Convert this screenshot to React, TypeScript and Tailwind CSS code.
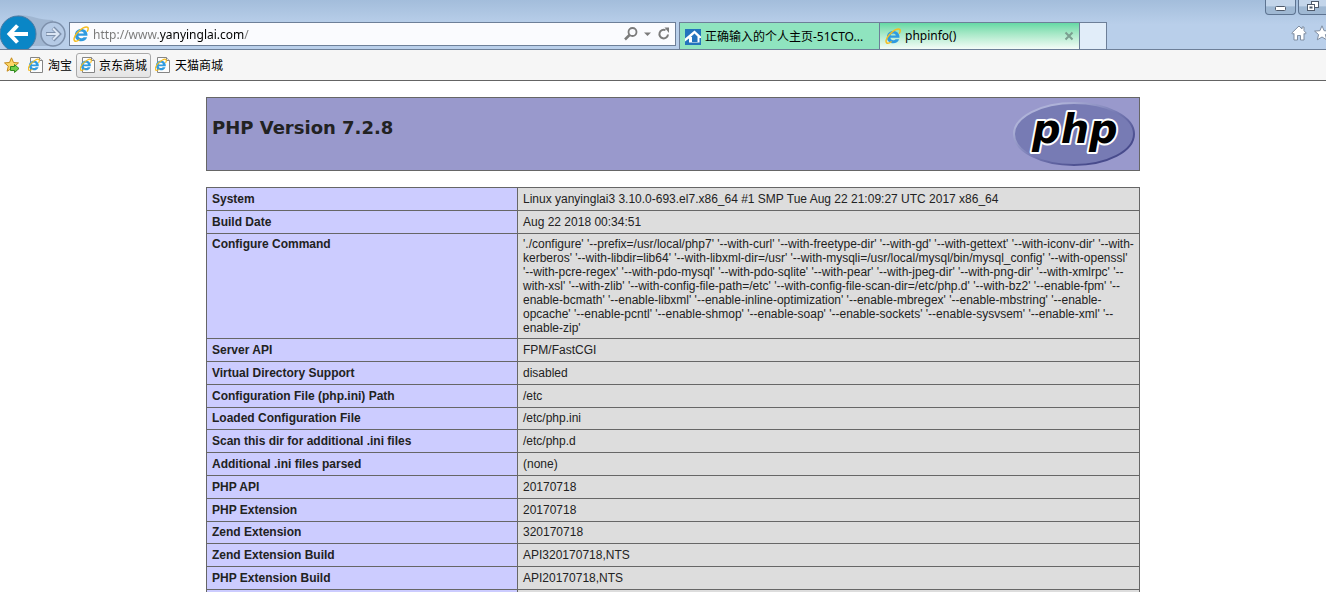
import React, { useState } from 'react';

const uiFont = "font-['Noto_Sans','Noto_Sans_CJK_SC',sans-serif]";

const configureCommand =
  "'./configure' '--prefix=/usr/local/php7' '--with-curl' '--with-freetype-dir' '--with-gd' '--with-gettext' '--with-iconv-dir' '--with-kerberos' '--with-libdir=lib64' '--with-libxml-dir=/usr' '--with-mysqli=/usr/local/mysql/bin/mysql_config' '--with-openssl' '--with-pcre-regex' '--with-pdo-mysql' '--with-pdo-sqlite' '--with-pear' '--with-jpeg-dir' '--with-png-dir' '--with-xmlrpc' '--with-xsl' '--with-zlib' '--with-config-file-path=/etc' '--with-config-file-scan-dir=/etc/php.d' '--with-bz2' '--enable-fpm' '--enable-bcmath' '--enable-libxml' '--enable-inline-optimization' '--enable-mbregex' '--enable-mbstring' '--enable-opcache' '--enable-pcntl' '--enable-shmop' '--enable-soap' '--enable-sockets' '--enable-sysvsem' '--enable-xml' '--enable-zip'";

// Tight rows have a little less padding
const rows = [
  { name: 'System', value: 'Linux yanyinglai3 3.10.0-693.el7.x86_64 #1 SMP Tue Aug 22 21:09:27 UTC 2017 x86_64' },
  { name: 'Build Date', value: 'Aug 22 2018 00:34:51' },
  { name: 'Configure Command', value: configureCommand, padding: 'py-[3px]' },
  { name: 'Server API', value: 'FPM/FastCGI' },
  { name: 'Virtual Directory Support', value: 'disabled' },
  { name: 'Configuration File (php.ini) Path', value: '/etc' },
  { name: 'Loaded Configuration File', value: '/etc/php.ini', padding: 'pt-[3px] pb-1' },
  { name: 'Scan this dir for additional .ini files', value: '/etc/php.d' },
  { name: 'Additional .ini files parsed', value: '(none)' },
  { name: 'PHP API', value: '20170718' },
  { name: 'PHP Extension', value: '20170718' },
  { name: 'Zend Extension', value: '320170718', padding: 'pt-[3px] pb-1' },
  { name: 'Zend Extension Build', value: 'API320170718,NTS' },
  { name: 'PHP Extension Build', value: 'API20170718,NTS' },
];

const IeShape = () => (
  <>
    <path d="M14.500 9.800H5.400c.1 1.600 1.300 2.500 2.800 2.500 1.100 0 1.800-.4 2.300-1.100h3.600c-.8 2.600-3 4-5.900 4-3.700 0-6.300-2.400-6.300-6 0-3.700 2.600-6.200 6.300-6.200 3.900 0 6.500 2.600 6.300 6.800zM5.500 7.600h5.300c-.1-1.300-1.200-2.100-2.600-2.100s-2.500.8-2.700 2.100z" fill="#2f9be0" />
    <path d="M2.200 15.200C.2 14.500.8 10.700 4.300 6.700 8 2.500 13-.2 14.700 1.400c.8.800.5 2.200-.3 3.700" fill="none" stroke="#f5bd22" strokeWidth="1.500" strokeLinecap="round" />
    <path d="M2.200 15.200c1 .3 2.600-.3 4.200-1.400" fill="none" stroke="#f5bd22" strokeWidth="1.200" strokeLinecap="round" />
  </>
);

const IeIcon = () => (
  <svg className="h-4 w-4 shrink-0" viewBox="0 0 16 16" aria-hidden="true">
    <IeShape />
  </svg>
);

const IePageIcon = () => (
  <svg className="h-4 w-4 shrink-0" viewBox="0 0 16 16" aria-hidden="true">
    <path d="M2.500.5h9l3 3v12h-12z" fill="#fdfdfd" stroke="#858585" />
    <path d="M11.500.5v3h3" fill="#e8e8e8" stroke="#858585" />
    <g transform="translate(-.5 1.500) scale(.78)">
      <IeShape />
    </g>
  </svg>
);

const PhpLogo = () => (
  <svg className="h-[65px] w-[122px] shrink-0" viewBox="0 0 122 65" role="img" aria-label="PHP logo">
    <defs>
      <linearGradient id="rim" x1="0" y1="0" x2="1" y2="1">
        <stop offset=".2" stopColor="#aeb2d8" />
        <stop offset=".5" stopColor="#777bb4" />
        <stop offset=".8" stopColor="#484b8c" />
      </linearGradient>
    </defs>
    <ellipse cx="61" cy="32" rx="60" ry="31" fill="#777bb4" stroke="url(#rim)" strokeWidth="2" />
    <text x="19" y="41" fontSize="40" stroke="#fff" strokeWidth="4" strokeLinejoin="round" paintOrder="stroke" className="font-['DejaVu_Sans',sans-serif] font-bold italic">
      php
    </text>
  </svg>
);

const NavButtons = () => (
  <div className="relative h-[34px] w-[69px] shrink-0">
    <svg className="h-[34px] w-[69px]" viewBox="0 0 69 34" aria-hidden="true">
      <path d="M18 0c14 0 20 5 35 5v26H18z" fill="#a0b6d1" />
      <circle cx="53" cy="19" r="12" fill="#b5cae5" stroke="#7d90ab" strokeWidth="1.500" />
      <path d="M46 19h13M53 13l6 6-6 6" fill="none" stroke="#7d90ab" strokeWidth="4" />
      <path d="M46.500 19h12M53 13.500l5.500 5.500-5.500 5.500" fill="none" stroke="#dbe6f4" strokeWidth="2" />
      <circle cx="18" cy="19" r="18" fill="#0a86c6" stroke="#4d7ba3" />
      <path d="M28 19H10M17.500 10.500L9.500 19l8 8.500" fill="none" stroke="#fff" strokeWidth="4" />
    </svg>
    <button aria-label="Back" className="absolute top-0 left-0 h-[34px] w-9 rounded-full" />
    <button aria-label="Forward" className="absolute top-1 right-1 h-7 w-6 rounded-full" />
  </div>
);

const AddressBar = () => {
  const [url, setUrl] = useState('http://www.yanyinglai.com/');

  return (
    <div className="mb-[3px] flex h-6 min-w-0 flex-1 items-center border border-[#6d7f98] bg-[#fafbfe] px-[3px]">
      <IeIcon />
      {/* The domain is darker than the rest of the address */}
      <input
        type="text"
        aria-label="Address"
        value={url}
        onChange={(e) => setUrl(e.target.value)}
        className={`ml-1 h-[22px] min-w-0 flex-1 bg-[linear-gradient(90deg,#777_66px,#000_66px,#000_151px,#777_151px)] bg-clip-text pt-px text-[12px] text-transparent outline-none ${uiFont}`}
      />
      <button aria-label="Search" className="ml-2">
        <svg className="h-4 w-4" viewBox="0 0 16 16" fill="none" stroke="#7b7b7b">
          <circle cx="9.500" cy="6" r="4" strokeWidth="1.800" />
          <path d="M6.500 9L2 13.500" strokeWidth="2.500" />
        </svg>
      </button>
      <button aria-label="Show addresses" className="ml-[3px]">
        <svg className="h-4 w-3" viewBox="0 0 12 16">
          <path d="M2 6.500h7L5.500 10z" fill="#7b7b7b" />
        </svg>
      </button>
      <button aria-label="Refresh" className="ml-[2px]">
        <svg className="h-4 w-4" viewBox="0 0 16 16" fill="none" stroke="#7b7b7b">
          <path d="M12 8.500a4.300 4.300 0 1 1-2.500-4.300" strokeWidth="2" />
          <path d="M8.500 1.500h4.500v5.500z" fill="#7b7b7b" stroke="none" />
        </svg>
      </button>
    </div>
  );
};

const Tabs = () => (
  <div className={`ml-[3px] flex h-[27px] shrink-0 border-t border-l border-[#6d7f98] text-[12px] text-black ${uiFont}`}>
    <button className="flex w-[200px] items-center border-r border-[#6d7f98] bg-[#8fe4bf] pt-px pl-[5px]">
      <svg className="mr-1 h-4 w-4 shrink-0" viewBox="0 0 16 16" aria-hidden="true">
        <path d="M0 0h16v16H0z" fill="#2373bd" />
        <path d="M0 9.500L9.500 1.500 16 7.500V9h-1.500v4.500H4V9.500L0 12.500z" fill="#fff" />
        <path d="M9.500 4.500l3 3V13H7V8L5.800 8z" fill="#2373bd" />
      </svg>
      <span className="whitespace-nowrap">正确输入的个人主页-51CTO...</span>
    </button>
    <div className="flex w-[200px] items-center border-r border-[#6d7f98] bg-gradient-to-b from-[#64d9a5] to-[#f4fcf8] pr-1 pl-[5px]">
      <button className="flex flex-1 items-center gap-1">
        <IeIcon />
        <span>phpinfo()</span>
      </button>
      <button aria-label="Close tab">
        <svg className="h-3 w-3" viewBox="0 0 12 12">
          <path d="M2.500 2.500l7 7M9.500 2.500l-7 7" stroke="#7b9f90" strokeWidth="2" />
        </svg>
      </button>
    </div>
    <button aria-label="New tab" className="w-[27px] border-r border-[#6d7f98] bg-[#e1edf9]" />
  </div>
);

const WindowTools = () => (
  <div className="flex h-[49px] w-[61px] shrink-0 flex-col justify-between overflow-hidden">
    <div className="flex gap-[2px]">
      <button aria-label="Minimize" className="h-[15px] w-[31px] shrink-0 rounded-b border border-t-0 border-[#5d7390] bg-gradient-to-b from-[#c3d5ea] from-40% to-[#9fb8d3] to-50%">
        <svg className="h-[14px] w-[29px]" viewBox="0 0 29 14">
          <rect x="9.500" y="6.500" width="10" height="4" rx="1" fill="#fff" stroke="#4f5a6b" />
        </svg>
      </button>
      <button aria-label="Restore" className="h-[15px] w-[31px] shrink-0 rounded-b border border-t-0 border-[#5d7390] bg-gradient-to-b from-[#c3d5ea] from-40% to-[#9fb8d3] to-50%">
        <svg className="h-[14px] w-[29px]" viewBox="0 0 29 14" fill="#fff" stroke="#4f5a6b">
          <rect x="12.500" y="1.500" width="7" height="6" />
          <rect x="8.500" y="4.500" width="7" height="6" />
          <rect x="11" y="7" width="2" height="1" />
        </svg>
      </button>
    </div>
    <div className="mb-2 ml-[26px] flex gap-[7px]">
      <button aria-label="Home" className="shrink-0">
        <svg className="h-4 w-4" viewBox="0 0 16 16">
          <path d="M8 1L.8 8l1 1.200L3 8.500V15h3.500v-4.500h3V15H13V8.500l1.200.7 1-1.200L13 5.700V2h-2v2z" fill="#fff" stroke="#7f8da1" strokeLinejoin="round" />
        </svg>
      </button>
      <button aria-label="Favorites" className="shrink-0">
        <svg className="h-4 w-4" viewBox="0 0 16 16">
          <path d="M8 .8l2.100 4.900 5.300.4-4 3.500 1.300 5.200L8 12l-4.700 2.800 1.300-5.200-4-3.500 5.300-.4z" fill="#fff" stroke="#7f8da1" strokeLinejoin="round" />
        </svg>
      </button>
    </div>
  </div>
);

const FavoritesBar = () => (
  <nav className={`flex h-[31px] items-center border-b border-[#646464] bg-[#f6f6f6] pl-1 text-[12px] text-black ${uiFont}`}>
    <button aria-label="Add to favorites">
      <svg className="h-4 w-4" viewBox="0 0 16 16">
        <path d="M7.500.8l2 4.700 5 .4-3.800 3.300 1.200 5-4.400-2.700-4.400 2.700 1.200-5L.5 5.900l5-.4z" fill="#fbd768" stroke="#c58a1a" strokeLinejoin="round" />
        <path d="M6.500 9.500h4v-2l4.500 4-4.500 4v-2h-4z" fill="#6fd04a" stroke="#2f8a1e" strokeLinejoin="round" />
      </svg>
    </button>
    <a href="#taobao" className="ml-1 flex h-[25px] items-center gap-1 px-1">
      <IePageIcon />
      <span className="pt-[2px]">淘宝</span>
    </a>
    <a href="#jd" className="flex h-[25px] items-center gap-[3px] rounded-[3px] border border-[#a9a9a9] bg-gradient-to-b from-[#f8f8f8] to-[#e4e4e4] px-[3px]">
      <IePageIcon />
      <span className="pt-[2px]">京东商城</span>
    </a>
    <a href="#tmall" className="flex h-[25px] items-center gap-1 px-1">
      <IePageIcon />
      <span className="pt-[2px]">天猫商城</span>
    </a>
  </nav>
);

const App: React.FC = () => {
  return (
    <div className="h-screen overflow-hidden bg-white">
      <header>
        <div className="flex h-[50px] items-end border-b border-[#6d7f98] bg-gradient-to-b from-[#a3bddb] to-[#b9cfea] to-50%">
          <NavButtons />
          <AddressBar />
          <Tabs />
          <div className="w-[158px] shrink-0" />
          <WindowTools />
        </div>
        <FavoritesBar />
      </header>

      {/* phpinfo page */}
      <main className="pt-4 pl-5 font-['Liberation_Sans',Arial,sans-serif] text-[#222]">
        <div className="mx-auto w-[934px] max-w-full">
          <div className="flex h-[74px] items-start justify-between border border-[#666] bg-[#9999cc] py-1 pr-1 pl-[5px]">
            <h1 className="mt-[14px] font-['DejaVu_Sans',sans-serif] text-[18px] leading-6 font-bold">PHP Version 7.2.8</h1>
            <PhpLogo />
          </div>
          <table className="mt-4 w-full table-fixed border-collapse text-[12px] leading-[14px]">
            <tbody>
              {rows.map((row) => (
                <tr key={row.name}>
                  <th scope="row" className={`w-[311px] border border-[#666] bg-[#ccccff] px-[5px] text-left align-top font-bold ${row.padding ?? 'py-1'}`}>
                    {row.name}
                  </th>
                  <td className={`border border-[#666] bg-[#dddddd] px-[5px] align-top break-words ${row.padding ?? 'py-1'}`}>
                    {row.value}
                  </td>
                </tr>
              ))}
              <tr>
                <th className="h-[23px] border border-[#666] bg-[#ccccff]" />
                <td className="border border-[#666] bg-[#dddddd]" />
              </tr>
            </tbody>
          </table>
        </div>
      </main>
    </div>
  );
};

export default App;
